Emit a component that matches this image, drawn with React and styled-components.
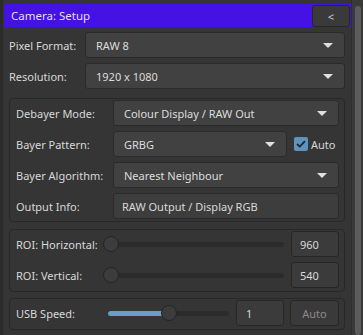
import React from 'react';
import styled, { createGlobalStyle } from 'styled-components';

const GlobalStyle = createGlobalStyle`
  html, body {
    margin: 0;
    padding: 0;
    background: #353535;
  }
  body {
    font-family: 'Noto Sans', sans-serif;
    font-size: 11px;
    color: #d8d8d8;
  }
`;

const Window = styled.div`
  display: flex;
  width: 363px;
  height: 335px;
  overflow: hidden;
  box-sizing: border-box;
  background: #353535;
  border-left: 3px solid #2b2b2b;
`;

const Dock = styled.div`
  flex: 1;
  display: flex;
  flex-direction: column;
  padding: 4px 0 0 1px;
`;

const TitleBar = styled.div`
  display: flex;
  align-items: center;
  justify-content: space-between;
  height: 23px;
  padding-left: 7px;
  background: #4412e2;
  color: #e4deff;
  font-size: 11.5px;
`;

const CollapseButton = styled.div`
  display: flex;
  align-items: center;
  justify-content: center;
  box-sizing: border-box;
  width: 38px;
  height: 22px;
  margin: 1px 1px 0 0;
  background: #3a3a3a;
  border: 1px solid #262626;
  border-radius: 3px;
  color: #c4d2e0;
  font-size: 11px;
`;

const Form = styled.div`
  display: flex;
  flex-direction: column;
  padding: 5px 6px 0 5px;
`;

const Rows = styled.div`
  display: flex;
  flex-direction: column;
  gap: 5px;
`;

const Row = styled.div`
  display: grid;
  grid-template-columns: ${(p) => p.$cols};
  column-gap: ${(p) => p.$gap || 0}px;
  align-items: center;
  height: 26px;
`;

const Label = styled.span`
  white-space: nowrap;
`;

const Group = styled.div`
  display: flex;
  flex-direction: column;
  gap: 5px;
  margin-top: ${(p) => p.$mt}px;
  padding: 1px 5px ${(p) => p.$pb}px 6px;
  border: 1px solid #282828;
  border-radius: 4px;
`;

const Combo = styled.div`
  display: flex;
  align-items: center;
  justify-content: space-between;
  box-sizing: border-box;
  height: 26px;
  padding: 0 11px 0 10px;
  background: #414141;
  border: 1px solid #2a2a2a;
  border-radius: 3px;
  color: #dcdcdc;
`;

const Arrow = styled.span`
  width: 0;
  height: 0;
  border-left: 5px solid transparent;
  border-right: 5px solid transparent;
  border-top: 5px solid #e0e0e0;
`;

const LineEdit = styled.div`
  display: flex;
  align-items: center;
  box-sizing: border-box;
  height: 26px;
  padding-left: 8px;
  background: #3d3d3d;
  border: 1px solid #2a2a2a;
  border-radius: 3px;
`;

const CheckRow = styled.div`
  display: flex;
  align-items: center;
  gap: 3px;
`;

const CheckBox = styled.span`
  display: flex;
  align-items: center;
  justify-content: center;
  width: 14px;
  height: 14px;
  background: #5f93bd;
  border-radius: 2px;
`;

const Slider = styled.div`
  position: relative;
  height: 16px;
  display: flex;
  align-items: center;
`;

const Groove = styled.div`
  flex: 1;
  height: 5px;
  border-radius: 3px;
  background: #2b2b2b;
  overflow: hidden;
`;

const Fill = styled.div`
  height: 100%;
  background: #6a9ec5;
`;

const Handle = styled.div`
  position: absolute;
  top: 0;
  box-sizing: border-box;
  width: 16px;
  height: 16px;
  border-radius: 50%;
  background: #3c3c3c;
  border: 1px solid #252525;
`;

const SpinBox = styled.div`
  display: flex;
  align-items: center;
  box-sizing: border-box;
  height: 26px;
  padding-left: ${(p) => p.$pad || 8}px;
  background: #3b3b3b;
  border: 1px solid #262626;
  border-radius: 3px;
`;

const Button = styled.div`
  display: flex;
  align-items: center;
  justify-content: center;
  box-sizing: border-box;
  height: 26px;
  margin-left: -1px;
  background: #3a3a3a;
  border: 1px solid #262626;
  border-radius: 3px;
  color: #8a8a8a;
`;

const ScrollBar = styled.div`
  width: 12px;
  padding: 6px 2px 0 3px;
  box-sizing: border-box;
  background: #393939;
  border-left: 1px solid #2e2e2e;
`;

const ScrollHandle = styled.div`
  height: 100%;
  border-radius: 3px;
  background: #5c5c5c;
`;

function ComboBox({ value }) {
  return (
    <Combo>
      <span>{value}</span>
      <Arrow />
    </Combo>
  );
}

function RangeSlider({ value }) {
  // value in 0..1, the handle travels inside the slider width
  const pos = `calc(${value} * (100% - 16px))`;
  return (
    <Slider>
      <Groove>
        {value > 0 && <Fill style={{ width: `calc(${value} * (100% - 16px) + 8px)` }} />}
      </Groove>
      <Handle style={{ left: pos }} />
    </Slider>
  );
}

export default function App() {
  return (
    <>
      <GlobalStyle />
      <Window>
        <Dock>
          <TitleBar>
            <span>Camera: Setup</span>
            <CollapseButton>&lt;</CollapseButton>
          </TitleBar>
          <Form>
            <Rows>
              <Row $cols="76px 1fr">
                <Label>Pixel Format:</Label>
                <ComboBox value="RAW 8" />
              </Row>
              <Row $cols="76px 1fr">
                <Label>Resolution:</Label>
                <ComboBox value="1920 x 1080" />
              </Row>
            </Rows>

            <Group $mt={9} $pb={2}>
              <Row $cols="97px 1fr">
                <Label>Debayer Mode:</Label>
                <ComboBox value="Colour Display / RAW Out" />
              </Row>
              <Row $cols="90px 174px 1fr" $gap={7}>
                <Label>Bayer Pattern:</Label>
                <ComboBox value="GRBG" />
                <CheckRow>
                  <CheckBox>
                    <svg width="10" height="8" viewBox="0 0 10 8">
                      <path d="M1 4 L3.8 6.6 L9 1.2" fill="none" stroke="#1c2733" strokeWidth="1.8" />
                    </svg>
                  </CheckBox>
                  <Label>Auto</Label>
                </CheckRow>
              </Row>
              <Row $cols="97px 1fr">
                <Label>Bayer Algorithm:</Label>
                <ComboBox value="Nearest Neighbour" />
              </Row>
              <Row $cols="97px 1fr">
                <Label>Output Info:</Label>
                <LineEdit>RAW Output / Display RGB</LineEdit>
              </Row>
            </Group>

            <Group $mt={7} $pb={3}>
              <Row $cols="80px 1fr 48px" $gap={7}>
                <Label>ROI: Horizontal:</Label>
                <RangeSlider value={0} />
                <SpinBox>960</SpinBox>
              </Row>
              <Row $cols="80px 1fr 48px" $gap={7}>
                <Label>ROI: Vertical:</Label>
                <RangeSlider value={0} />
                <SpinBox>540</SpinBox>
              </Row>
            </Group>

            <Group $mt={6} $pb={3}>
              <Row $cols="85px 1fr 48px 48px" $gap={7}>
                <Label>USB Speed:</Label>
                <RangeSlider value={0.5} />
                <SpinBox $pad={9}>1</SpinBox>
                <Button>Auto</Button>
              </Row>
            </Group>
          </Form>
        </Dock>
        <ScrollBar>
          <ScrollHandle />
        </ScrollBar>
      </Window>
    </>
  );
}
